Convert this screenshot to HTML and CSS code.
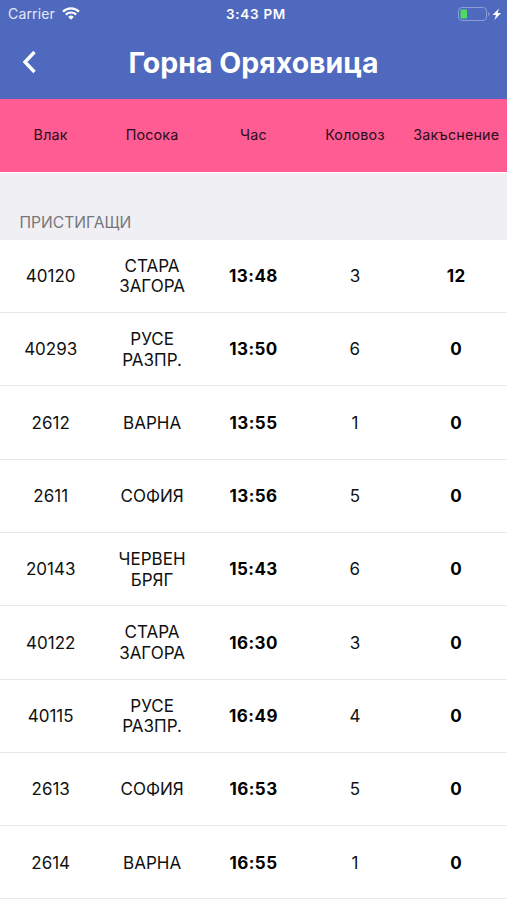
FILE: index.html
```html
<!DOCTYPE html>
<html lang="bg">
<head>
    <meta charset="UTF-8">
    <meta name="viewport" content="width=device-width, initial-scale=1.0">
    <title>Горна Оряховица</title>
    <link rel="stylesheet" href="styles.css">
</head>
<body>

<div class="top">
    <div class="status-bar">
        <div class="carrier">
            <span>Carrier</span>
            <svg class="wifi" width="18" height="13" viewBox="0 0 18 13">
                <path d="M1 4.6a11.6 11.6 0 0 1 16 0" fill="none" stroke="#fff" stroke-width="2.2"/>
                <path d="M3.8 7.6a7.5 7.5 0 0 1 10.4 0" fill="none" stroke="#fff" stroke-width="2.2"/>
                <path d="M9 12.8L6.2 9.9a4 4 0 0 1 5.6 0z" fill="#fff"/>
            </svg>
        </div>
        <div class="clock">3:43 PM</div>
        <div class="battery">
            <svg width="44" height="16" viewBox="0 0 44 16">
                <rect x="0.5" y="1.5" width="28" height="13" rx="3.5" fill="none" stroke="#8c9dd5"/>
                <rect x="2.5" y="3.5" width="6.5" height="9" rx="1" fill="#4cd964"/>
                <path d="M30 6c2 .8 2 3.200 0 4z" fill="#8c9dd5"/>
                <path d="M41 2.500l-6.500 6.500h3.500L36.500 14l6.500-7h-3.500z" fill="#fff"/>
            </svg>
        </div>
    </div>
    <div class="nav">
        <svg class="back" width="16" height="24" viewBox="0 0 16 24">
            <path d="M13.500 2L4 12l9.500 10" fill="none" stroke="#fff" stroke-width="3.4"/>
        </svg>
        <h1>Горна Оряховица</h1>
    </div>
</div>

<div class="row head">
    <span>Влак</span>
    <span>Посока</span>
    <span>Час</span>
    <span>Коловоз</span>
    <span>Закъснение</span>
</div>

<h2 class="section">ПРИСТИГАЩИ</h2>

<div class="list">
    <div class="row"><span>40120</span><span>СТАРА ЗАГОРА</span><b>13:48</b><span>3</span><b>12</b></div>
    <div class="row"><span>40293</span><span>РУСЕ РАЗПР.</span><b>13:50</b><span>6</span><b>0</b></div>
    <div class="row"><span>2612</span><span>ВАРНА</span><b>13:55</b><span>1</span><b>0</b></div>
    <div class="row"><span>2611</span><span>СОФИЯ</span><b>13:56</b><span>5</span><b>0</b></div>
    <div class="row"><span>20143</span><span>ЧЕРВЕН БРЯГ</span><b>15:43</b><span>6</span><b>0</b></div>
    <div class="row"><span>40122</span><span>СТАРА ЗАГОРА</span><b>16:30</b><span>3</span><b>0</b></div>
    <div class="row"><span>40115</span><span>РУСЕ РАЗПР.</span><b>16:49</b><span>4</span><b>0</b></div>
    <div class="row"><span>2613</span><span>СОФИЯ</span><b>16:53</b><span>5</span><b>0</b></div>
    <div class="row"><span>2614</span><span>ВАРНА</span><b>16:55</b><span>1</span><b>0</b></div>
</div>

</body>
</html>
```

FILE: styles.css
```css
* {
    box-sizing: border-box;
}
body {
    margin: 0;
    height: 900px;
    overflow: hidden;
    font-family: Inter, sans-serif;
    background-color: #fff;
    color: #111;
}
.top {
    height: 98.5px;
    background-color: #4e69be;
    color: #fff;
}
.status-bar {
    display: grid;
    grid-template-columns: 1fr auto 1fr;
    align-items: center;
    height: 27px;
    padding: 0 5px 0 8px;
    font-size: 14px;
}
.carrier {
    display: flex;
    align-items: center;
    gap: 7px;
    color: #e4e9f8;
    letter-spacing: 0.15px;
}
.clock {
    padding-left: 2px;
    font-size: 13.5px;
    font-weight: 600;
    letter-spacing: 0.7px;
}
.battery {
    display: flex;
    justify-content: flex-end;
}
.nav {
    display: grid;
    grid-template-columns: 40px 1fr 40px;
    align-items: center;
    height: 70px;
}
.back {
    margin-left: 21px;
}
h1 {
    margin: 0;
    font-size: 28.5px;
    font-weight: 700;
    text-align: center;
    white-space: nowrap;
}
.row {
    display: grid;
    grid-template-columns: repeat(5, 1fr);
    align-items: center;
    height: 73.3px;
    border-bottom: 1px solid #e9e9eb;
    font-size: 17px;
    line-height: 20.5px;
    text-align: center;
}
.row > * {
    padding: 1px 12px 0;
}
.row b {
    color: #000;
    font-weight: 700;
    letter-spacing: 0.45px;
}
.head {
    height: 74px;
    border-bottom: 1px solid #fff;
    background-color: #ff5c93;
    background-clip: padding-box;
    color: #2b0d18;
    font-size: 14.3px;
    letter-spacing: 0.2px;
}
.head > * {
    padding: 1px 0 0;
}
.section {
    display: flex;
    align-items: flex-end;
    height: 67.3px;
    margin: 0;
    padding: 0 19.500px 8px;
    background-color: #efeff4;
    color: #77777b;
    font-size: 15.6px;
    font-weight: 400;
}
```
